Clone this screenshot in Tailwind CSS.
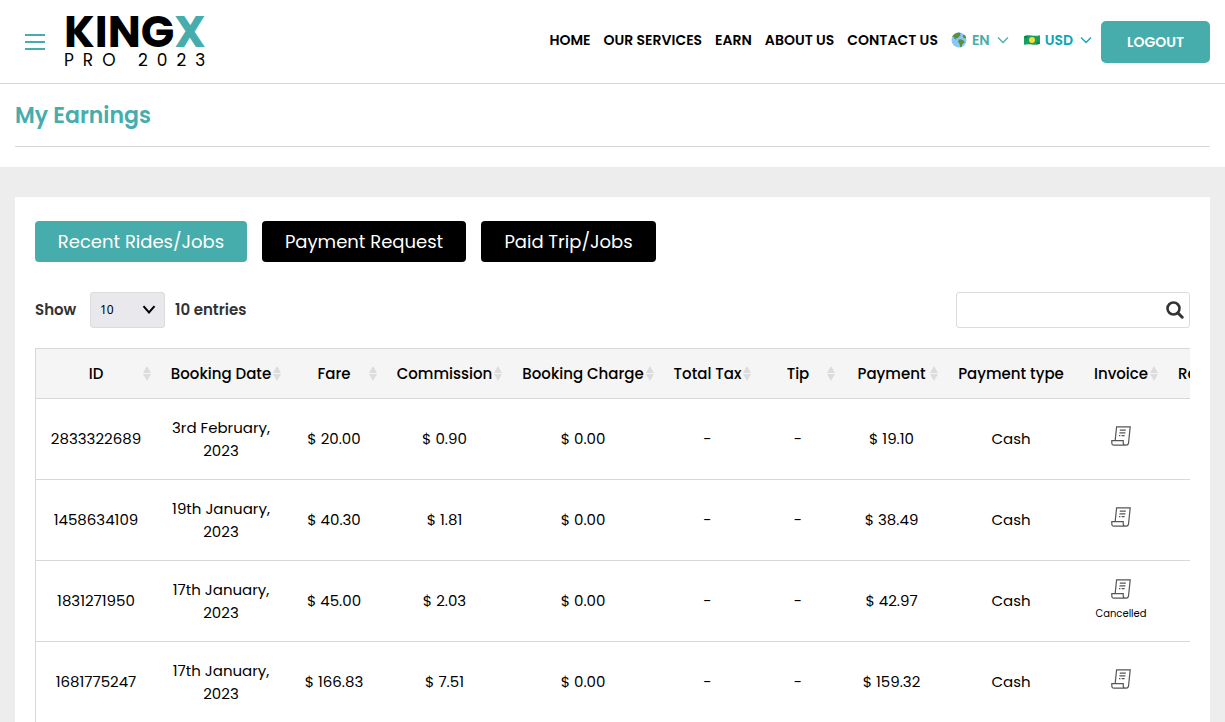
<!DOCTYPE html>
<html lang="en">
<head>
  <meta charset="UTF-8" />
  <meta name="viewport" content="width=device-width, initial-scale=1.0" />
  <title>My Earnings - KingX Pro 2023</title>
  <script src="https://cdn.jsdelivr.net/npm/@tailwindcss/browser@4"></script>
</head>
<body class="bg-[#ededed] text-black font-[Poppins,Inter,sans-serif]">

  <!-- Shared icons -->
  <svg class="hidden">
    <symbol id="sort" viewBox="0 0 8 15">
      <path d="M4 0l4 7H0zM4 15l4-7H0z" fill="#dcdcdc" />
    </symbol>
    <symbol id="chevron" viewBox="0 0 12 8">
      <path d="M1 1.5l5 5 5-5" fill="none" stroke="currentColor" stroke-width="1.3" />
    </symbol>
    <symbol id="receipt" viewBox="0 0 20 20">
      <g fill="none" stroke="#555" stroke-width="1.2">
        <path d="M4.2 14.4L5.6.8h13.6l-1.7 16.4q-.3 2-2.3 2H3q-2.2 0-2.2-2.4v-2.2h11.4v2.4q.2 2.2 2.4 2.2" />
        <path d="M8.8 4.2h6M8.4 6.9h6M8 9.6h1.4M10.6 9.6h3" />
      </g>
    </symbol>
  </svg>

  <!-- Header -->
  <header class="bg-white border-b border-[#d8d8d8] h-[84px] px-[15px] flex justify-between items-center">
    <div class="flex items-center">
      <button type="button" aria-label="Menu" class="ml-[10px] mr-[19px] flex flex-col gap-[5px]">
        <span class="block w-5 h-[2px] bg-[#46adac]"></span>
        <span class="block w-5 h-[2px] bg-[#46adac]"></span>
        <span class="block w-5 h-[2px] bg-[#46adac]"></span>
      </button>
      <a href="#" class="flex flex-col">
        <span class="text-[44px] leading-[36px] font-bold">KING<span class="text-[#46adac]">X</span></span>
        <span class="text-[17px] leading-5 tracking-[9px]">PRO 2023</span>
      </a>
    </div>
    <div class="flex items-center">
      <nav class="flex items-center gap-[13px] text-sm font-semibold pb-1">
        <a href="#">HOME</a>
        <a href="#">OUR SERVICES</a>
        <a href="#">EARN</a>
        <a href="#">ABOUT US</a>
        <a href="#">CONTACT US</a>
        <button type="button" class="flex items-center text-[#46adac]">
          <svg class="w-4 h-4 mr-[5px]" viewBox="0 0 16 16">
            <circle cx="8" cy="8" r="7.5" fill="#88c9f9" />
            <path d="M3 2.5Q5 .6 8 .5l2 .8-1.200 1.200 1 1-2 1.200-.8 1.500-2-.3.6 1.800-1.800-.8-1.400-2.400-1.700.2Q2 3.500 3 2.500zM7.500 7.600l2.500-.4 3 1.600.5 1.700-2 1.400-1 3-1.300.3-.6-3.200-1.500-2zM12 3l2-.1 1.300 3-1.600.6-1.900-1.500z" fill="#5c913b" />
          </svg>
          EN
          <svg class="w-3 h-2 ml-[7px]"><use href="#chevron" /></svg>
        </button>
        <button type="button" class="flex items-center text-[#0aa6b5] ml-[2px]">
          <svg class="w-4 h-[10px] mr-[5px]" viewBox="0 0 16 10">
            <path d="M0 1.200Q4-.3 8 .4T16 .2v8.600Q12 10.300 8 9.600T0 9.800z" fill="#17a05d" />
            <path d="M0 1.200L4 .2 2 4zM16 8.800l-4 .9 2-3.700z" fill="#0c7f46" />
            <circle cx="8" cy="5" r="3" fill="#ffd93b" />
          </svg>
          USD
          <svg class="w-3 h-2 ml-[7px]"><use href="#chevron" /></svg>
        </button>
      </nav>
      <button type="button" class="ml-[9px] w-[109px] h-[42px] rounded-[5px] bg-[#46adac] text-white text-sm font-semibold">LOGOUT</button>
    </div>
  </header>

  <!-- Page title -->
  <section class="bg-white px-[15px] pb-5">
    <h1 class="pt-[2px] text-[22px] leading-[60px] font-semibold text-[#46adac] border-b border-[#d8d8d8]">My Earnings</h1>
  </section>

  <main class="px-[15px] py-[30px]">
    <div class="bg-white px-5 pt-6 pb-5">

      <!-- Tabs -->
      <div class="flex gap-[15px] text-lg text-white">
        <button type="button" class="w-[212px] h-[41px] rounded bg-[#46adac]">Recent Rides/Jobs</button>
        <button type="button" class="w-[204px] h-[41px] rounded bg-black">Payment Request</button>
        <button type="button" class="w-[175px] h-[41px] rounded bg-black">Paid Trip/Jobs</button>
      </div>

      <!-- Filter row -->
      <div class="flex justify-between items-center mt-[30px] mb-5">
        <div class="flex items-center text-[15px] font-semibold text-[#333]">
          <label for="pageSize" class="w-[55px]">Show</label>
          <div class="relative mr-[10px]">
            <select id="pageSize" class="block appearance-none w-[75px] h-9 pl-[9px] rounded-[3px] border border-[#dcdcdc] bg-[#e9e8ed] text-black text-xs font-normal font-['Noto_Sans']">
              <option>10</option>
              <option>25</option>
              <option>50</option>
            </select>
            <svg class="absolute right-[9px] top-[13px] w-[14px] h-[10px] pointer-events-none" viewBox="0 0 14 10">
              <path d="M1.500 1.200L7 7.500l5.500-6.300" fill="none" stroke="#000" stroke-width="2" />
            </svg>
          </div>
          <span>10 entries</span>
        </div>
        <div class="relative">
          <input type="text" aria-label="Search" class="block w-[234px] h-9 pl-3 pr-9 rounded-[3px] border border-[#dcdcdc] text-sm" />
          <svg class="absolute right-[6px] top-[9px] w-[18px] h-[18px]" viewBox="0 0 18 18">
            <circle cx="7.500" cy="7.500" r="6" fill="none" stroke="#333" stroke-width="2.600" />
            <path d="M12 12l4.200 4.200" stroke="#333" stroke-width="3" stroke-linecap="round" />
          </svg>
        </div>
      </div>

      <!-- Rides table -->
      <div class="border-l border-t border-[#d8d8d8] overflow-x-auto">
        <table class="table-fixed w-[1230px] text-[15px] leading-[23px] text-center">
          <colgroup>
            <col class="w-[120px]" />
            <col class="w-[130px]" />
            <col class="w-[96px]" />
            <col class="w-[125px]" />
            <col class="w-[152px]" />
            <col class="w-[97px]" />
            <col class="w-[84px]" />
            <col class="w-[103px]" />
            <col class="w-[136px]" />
            <col class="w-[84px]" />
            <col class="w-[103px]" />
          </colgroup>
          <thead>
            <tr id="headRow" class="h-[49px] bg-[#f5f5f5] border-b border-[#d8d8d8]"></tr>
          </thead>
          <tbody id="rideRows"></tbody>
        </table>
      </div>
    </div>
  </main>

  <script>
    const columns = [
      { name: "ID", sort: true },
      { name: "Booking Date", sort: true },
      { name: "Fare", sort: true },
      { name: "Commission", sort: true },
      { name: "Booking Charge", sort: true },
      { name: "Total Tax", sort: true },
      { name: "Tip", sort: true },
      { name: "Payment", sort: true },
      { name: "Payment type", sort: false },
      { name: "Invoice", sort: true },
      { name: "Review", sort: false, left: true }
    ];

    const rides = [
      { id: "2833322689", date: "3rd February,", year: "2023", fare: "20.00", commission: "0.90", payment: "19.10", status: "" },
      { id: "1458634109", date: "19th January,", year: "2023", fare: "40.30", commission: "1.81", payment: "38.49", status: "" },
      { id: "1831271950", date: "17th January,", year: "2023", fare: "45.00", commission: "2.03", payment: "42.97", status: "Cancelled" },
      { id: "1681775247", date: "17th January,", year: "2023", fare: "166.83", commission: "7.51", payment: "159.32", status: "" }
    ];

    document.getElementById('headRow').innerHTML = columns.map(col => `
      <th class="relative font-medium whitespace-nowrap ${col.left ? 'text-left px-[15px]' : ''}">
        ${col.name}
        ${col.sort ? '<svg class="absolute right-[5px] top-[17px] w-2 h-[15px]"><use href="#sort" /></svg>' : ''}
      </th>
    `).join("");

    document.getElementById('rideRows').innerHTML = rides.map(ride => `
      <tr class="h-[81px] border-b border-[#d8d8d8]">
        <td>${ride.id}</td>
        <td>${ride.date}<br />${ride.year}</td>
        <td>$ ${ride.fare}</td>
        <td>$ ${ride.commission}</td>
        <td>$ 0.00</td>
        <td>-</td>
        <td>-</td>
        <td>$ ${ride.payment}</td>
        <td>Cash</td>
        <td>
          <a href="#" aria-label="Invoice" class="block pb-[6px]"><svg class="w-5 h-5 mx-auto"><use href="#receipt" /></svg></a>
          ${ride.status ? `<p class="text-[10px] leading-[18px]">${ride.status}</p>` : ''}
        </td>
        <td></td>
      </tr>
    `).join("");
  </script>
</body>
</html>
